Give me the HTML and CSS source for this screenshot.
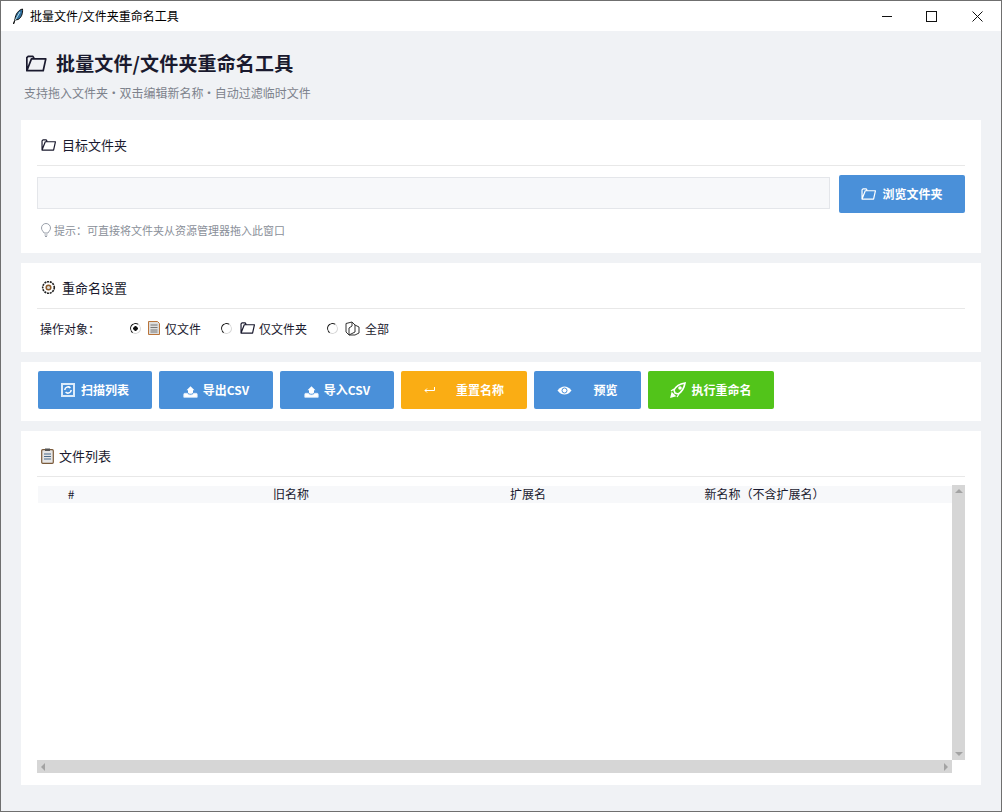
FILE: index.html
```html
<!DOCTYPE html>
<html lang="zh-CN">
  <head>
    <meta charset="UTF-8" />
    <title>批量文件/文件夹重命名工具</title>
    <link rel="stylesheet" href="styles.css">
  </head>
  <body>
    <svg class="defs" width="0" height="0">
      <symbol id="folder" viewBox="0 0 16 13">
        <path d="M1 12V2l1-1h3.500l1 1.500M1 12L4.500 3H15.500L13.500 12z" fill="none" stroke="currentColor" stroke-width="1.300" stroke-linejoin="round" />
      </symbol>
      <symbol id="tray" viewBox="0 0 15 12">
        <path d="M.8 11.300V8.300C.8 7.700 1.200 7.300 1.800 7.300H4.500C4.500 9.500 10.500 9.500 10.500 7.300H13.200C13.800 7.300 14.200 7.700 14.200 8.300V11.300z" fill="#fff" stroke="#dcebfa" stroke-width=".8" />
        <path d="M7.500 .3L11.500 4.300H10V6.500C10 8.300 5 8.300 5 6.500V4.300H3.500z" fill="#fff" />
      </symbol>
    </svg>

    <div class="window">
      <div class="titlebar">
        <svg class="app-icon" width="12" height="17" viewBox="0 0 12 17">
          <path d="M1.500 16L3 11C3.500 6 6.500 2 10.500 1c.5 4-1 9-4.500 10.500L3 12z" fill="#2f6f9f" stroke="#111" stroke-width="1" />
          <path d="M3 12.500L8 4" stroke="#dff" stroke-width=".8" />
        </svg>
        <span class="app-title">批量文件/文件夹重命名工具</span>
        <div class="win-controls">
          <span class="win-min"></span>
          <span class="win-max"></span>
          <svg class="win-close" width="11" height="11" viewBox="0 0 11 11">
            <path d="M.5 .5l10 10M10.500 .5l-10 10" stroke="#111" stroke-width="1" />
          </svg>
        </div>
      </div>

      <div class="content">
        <div class="page-head">
          <h1><svg class="icon-title"><use href="#folder" /></svg>批量文件/文件夹重命名工具</h1>
          <p>支持拖入文件夹 · 双击编辑新名称 · 自动过滤临时文件</p>
        </div>

        <section class="card">
          <h2 class="card-title"><svg class="icon-md"><use href="#folder" /></svg>目标文件夹</h2>
          <div class="path-row">
            <div class="path-input"></div>
            <button class="btn btn-blue btn-browse"><svg class="icon-md"><use href="#folder" /></svg><span>浏览文件夹</span></button>
          </div>
          <div class="hint">
            <svg width="12" height="14" viewBox="0 0 12 14">
              <path d="M4 10C3.500 8.500 1.500 7.500 1.500 5a4.500 4.500 0 0 1 9 0c0 2.500-2 3.500-2.500 5zM4.500 12h3M5 13.500h2" fill="none" stroke="#9aa0aa" stroke-width="1" />
            </svg>
            <span>提示&#xFF1A;可直接将文件夹从资源管理器拖入此窗口</span>
          </div>
        </section>

        <section class="card">
          <h2 class="card-title">
            <svg class="icon-gear" width="15" height="15" viewBox="0 0 15 15">
              <circle cx="7.500" cy="7.500" r="5.800" fill="none" stroke="#222" stroke-width="1.600" stroke-dasharray="2 .8" />
              <circle cx="7.500" cy="7.500" r="2.300" fill="#ddd" stroke="#8a5a2a" stroke-width="1.500" />
            </svg>
            重命名设置
          </h2>
          <div class="radio-row">
            <span class="radio-label">操作对象&#xFF1A;</span>
            <label class="radio radio-file">
              <span class="radio-dot checked"></span>
              <svg width="12" height="14" viewBox="0 0 12 14">
                <path d="M.5 .5h9l2 2v11H.5z" fill="#ddd" stroke="#b9743a" />
                <path d="M2.500 4h7M2.500 6.500h7M2.500 9h7M2.500 11h7" stroke="#777" />
              </svg>
              仅文件
            </label>
            <label class="radio radio-folder">
              <span class="radio-dot"></span>
              <svg class="icon-md"><use href="#folder" /></svg>
              仅文件夹
            </label>
            <label class="radio radio-all">
              <span class="radio-dot"></span>
              <svg width="15" height="15" viewBox="0 0 15 15">
                <path d="M1 2.500L7 1l3 3v7l-6 3-3-3z" fill="#fff" stroke="#333" />
                <path d="M7 1v4L4 7v7M10 4l4 2v6l-4 2H4" fill="none" stroke="#333" />
              </svg>
              全部
            </label>
          </div>
        </section>

        <section class="card card-actions">
          <button class="btn btn-blue btn-md">
            <svg width="14" height="14" viewBox="0 0 14 14">
              <rect x="1" y="1" width="12" height="12" fill="none" stroke="#dcebfa" stroke-width="2" />
              <path d="M3.800 7a3.200 3.200 0 0 1 5.600-2M10.200 7a3.200 3.200 0 0 1-5.600 2" fill="none" stroke="#fff" stroke-width="1.500" />
            </svg>
            <span>扫描列表</span>
          </button>
          <button class="btn btn-blue btn-md btn-csv"><svg class="icon-tray"><use href="#tray" /></svg><span>导出CSV</span></button>
          <button class="btn btn-blue btn-md btn-csv"><svg class="icon-tray"><use href="#tray" /></svg><span>导入CSV</span></button>
          <button class="btn btn-orange btn-lg gap-wide">
            <svg width="11" height="6" viewBox="0 0 11 6">
              <path d="M10.500 0v3.500H1M3 1.500L1 3.500l2 2" fill="none" stroke="#fff" stroke-width="1" />
            </svg>
            <span>重置名称</span>
          </button>
          <button class="btn btn-blue btn-sm gap-wide">
            <svg width="15" height="9" viewBox="0 0 15 9">
              <path d="M.5 4.500C3 1.500 5 .5 7.500 .5s4.500 1 7 4c-2.500 3-4.500 4-7 4s-4.500-1-7-4z" fill="#fff" />
              <circle cx="7.500" cy="4.500" r="2.500" fill="none" stroke="#4a90d9" stroke-width="1" />
            </svg>
            <span>预览</span>
          </button>
          <button class="btn btn-green btn-lg gap-tight">
            <svg width="16" height="16" viewBox="0 0 16 16">
              <path d="M5 11L4 8c1.500-3 5-6 11-7-1 6-4 9.500-7 11z" fill="none" stroke="#fff" stroke-width="1.600" />
              <circle cx="10" cy="6" r="1.800" fill="#fff" />
              <path d="M1 15l1-4 3 3zM1 9l3-2M7 15l2-3" fill="#fff" stroke="#fff" stroke-width="1.300" />
            </svg>
            <span>执行重命名</span>
          </button>
        </section>

        <section class="card card-list">
          <h2 class="card-title title-list">
            <svg width="13" height="16" viewBox="0 0 13 16">
              <rect x=".7" y="1.700" width="11.600" height="13.600" rx="1" fill="#e6e6e6" stroke="#7a5a3a" stroke-width="1.200" />
              <rect x="4" y=".5" width="5" height="2.500" fill="#555" />
              <path d="M3 6h7M3 8.500h7M3 11h7" stroke="#4a6a8a" stroke-width="1" />
            </svg>
            文件列表
          </h2>
          <div class="tree">
            <div class="tree-body">
              <div class="tree-head">
                <span>#</span>
                <span>旧名称</span>
                <span>扩展名</span>
                <span>新名称&#xFF08;不含扩展名&#xFF09;</span>
              </div>
            </div>
            <div class="vscroll">
              <span class="arrow arrow-up"></span>
              <span class="arrow arrow-down"></span>
            </div>
            <div class="hscroll">
              <span class="arrow arrow-left"></span>
              <span class="arrow arrow-right"></span>
            </div>
          </div>
        </section>
      </div>
    </div>
  </body>
</html>
```

FILE: styles.css
```css
* {
  box-sizing: border-box;
}

body {
  margin: 0;
  font-family: "Noto Sans CJK SC", "Noto Sans", sans-serif;
  font-size: 12px;
  color: #1a1a2e;
  background-color: #f0f2f5;
}

.defs {
  display: block;
  height: 0;
}

.window {
  height: 812px;
  border: 1px solid #6f6f6f;
  background-color: #f0f2f5;
  overflow: hidden;
}

.titlebar {
  display: flex;
  align-items: center;
  height: 30px;
  padding-left: 11px;
  background-color: white;
  color: #000;
}

.app-title {
  margin-left: 6px;
  line-height: 16px;
}

.win-controls {
  display: flex;
  align-items: center;
  margin-left: auto;
  padding-right: 18px;
}

.win-min {
  width: 10px;
  height: 1px;
  background-color: #111;
}

.win-max {
  width: 11px;
  height: 11px;
  margin-left: 34px;
  border: 1px solid #111;
}

.win-close {
  margin-left: 35px;
}

.content {
  display: flex;
  flex-direction: column;
  gap: 10px;
  padding: 0 20px;
}

.page-head {
  height: 79px;
  padding: 20px 3px 0;
}

.page-head h1 {
  display: flex;
  align-items: center;
  margin: 0;
  font-size: 19px;
  line-height: 24px;
  font-weight: 700;
  letter-spacing: .15px;
}

.icon-title {
  width: 22px;
  height: 17px;
  margin: 0 9px 0 1px;
}

.page-head p {
  margin: 9px 0 0;
  line-height: 18px;
  color: #7d828c;
  word-spacing: -3px;
}

.card {
  padding: 0 16px;
  background-color: white;
}

.card-title {
  display: flex;
  align-items: center;
  gap: 6px;
  height: 46px;
  margin: 0;
  padding: 4px 4px 0;
  border-bottom: 1px solid #e8e8e8;
  font-size: 13px;
  line-height: 20px;
  font-weight: 400;
}

.title-list {
  gap: 5px;
}

.icon-md {
  width: 15px;
  height: 12px;
}

.path-row {
  display: flex;
  align-items: flex-start;
  justify-content: space-between;
  height: 38px;
  margin-top: 9px;
}

.path-input {
  width: 793px;
  height: 32px;
  margin-top: 2px;
  border: 1px solid #e4e6ea;
  background-color: #f7f8fa;
}

.hint {
  display: flex;
  align-items: center;
  gap: 2px;
  height: 40px;
  padding: 0 0 6px 3px;
  font-size: 11px;
  color: #8a8f99;
}

.radio-row {
  display: flex;
  align-items: center;
  height: 43px;
  padding-bottom: 5px;
}

.radio-label {
  width: 93px;
  padding-left: 3px;
}

.radio {
  display: flex;
  align-items: center;
  gap: 5px;
}

.radio-dot {
  width: 11px;
  height: 11px;
  margin-right: 2px;
  border: 1px solid;
  border-color: #222 #d8d8d8 #d8d8d8 #222;
  border-radius: 50%;
  transform: rotate(-10deg);
}

.radio-dot.checked {
  background: radial-gradient(circle, #111 0 2px, white 2.5px);
}

.radio-file {
  width: 91px;
}

.radio-folder {
  width: 106px;
  gap: 4px;
}

.radio-folder .radio-dot {
  margin-right: 4px;
}

.card-actions {
  display: flex;
  gap: 7px;
  height: 59px;
  padding: 9px 17px 0;
}

.btn {
  display: flex;
  align-items: center;
  justify-content: center;
  gap: 6px;
  height: 38px;
  padding: 0;
  border: none;
  border-radius: 2px;
  color: white;
  font-family: inherit;
  font-size: 12px;
  font-weight: 700;
}

.btn span {
  padding-bottom: 2px;
}

.btn-blue {
  background-color: #4a90d9;
}

.btn-orange {
  background-color: #faad14;
}

.btn-green {
  background-color: #52c41a;
}

.btn-browse {
  width: 126px;
}

.btn-md {
  width: 114px;
}

.btn-lg {
  width: 126px;
}

.btn-sm {
  width: 107px;
}

.btn-csv {
  gap: 5px;
}

.gap-wide {
  gap: 21px;
}

.gap-tight {
  gap: 5px;
}

.icon-tray {
  width: 15px;
  height: 12px;
  margin-top: 4px;
}

.card-list {
  height: 354px;
}

.tree {
  display: grid;
  grid-template-columns: 915px 13px;
  grid-template-rows: 275px 13px;
  margin-top: 8px;
}

.tree-body {
  padding: 1px 0 0 1px;
}

.tree-head {
  display: grid;
  grid-template-columns: 66px 374px 100px 373px;
  height: 17px;
  line-height: 15px;
  background-color: #f7f8fa;
  text-align: center;
}

.vscroll {
  display: flex;
  flex-direction: column;
  align-items: center;
  justify-content: space-between;
  padding: 4px 0;
  background-color: #d6d6d6;
}

.hscroll {
  display: flex;
  align-items: center;
  justify-content: space-between;
  padding: 0 4px;
  background-color: #d6d6d6;
}

.arrow {
  width: 0;
  height: 0;
  border: 4px solid transparent;
}

.arrow-up {
  border-top-width: 0;
  border-bottom-color: #a3a3a3;
}

.arrow-down {
  border-bottom-width: 0;
  border-top-color: #a3a3a3;
}

.arrow-left {
  border-left-width: 0;
  border-right-color: #a3a3a3;
}

.arrow-right {
  border-right-width: 0;
  border-left-color: #a3a3a3;
}
```
